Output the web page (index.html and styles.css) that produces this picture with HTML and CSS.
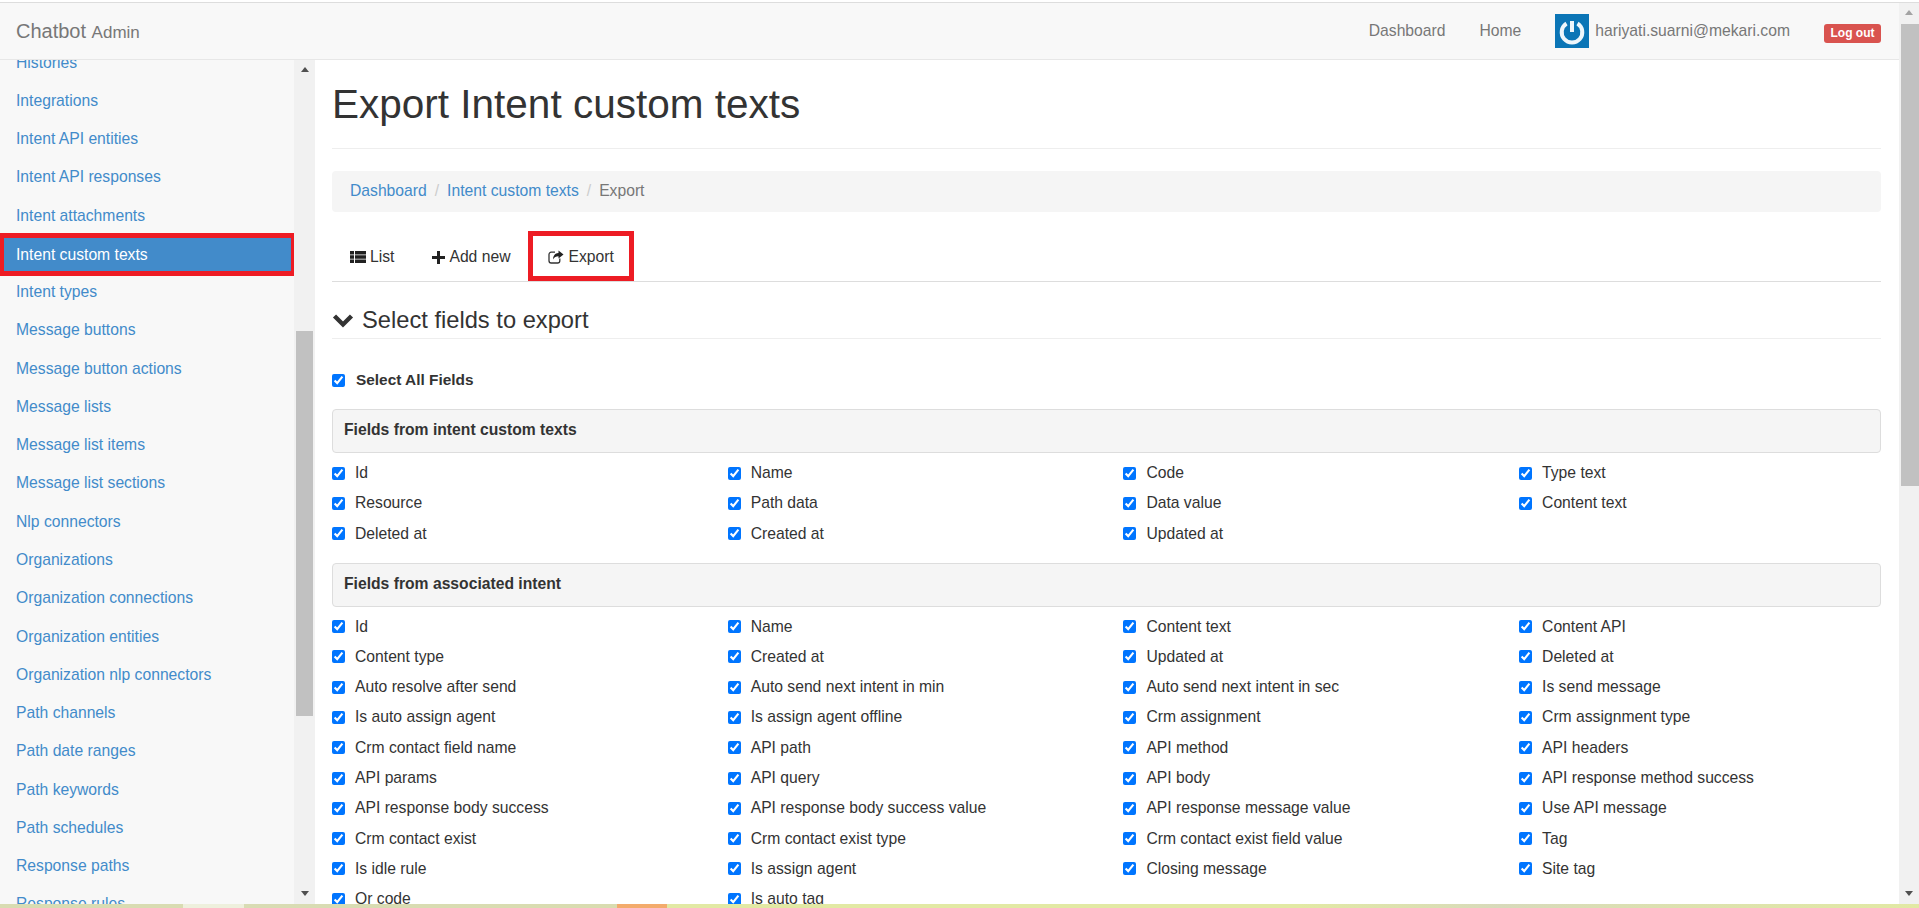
FILE: index.html
```html
<!DOCTYPE html>
<html lang="en">
<head>
  <meta charset="UTF-8">
  <title>Export Intent custom texts</title>
  <link rel="stylesheet" href="styles.css">
</head>
<body>

<div class="top-line"></div>

<div class="window">
  <div class="app">
    <header class="navbar">
      <div class="brand">Chatbot <small>Admin</small></div>
      <nav class="top-nav">
        <a href="#">Dashboard</a>
        <a href="#">Home</a>
        <span class="user">
          <svg class="avatar" viewBox="0 0 34 34">
            <rect width="34" height="34" fill="#0b75b6"/>
            <path d="M11.5 9.5a10.3 10.3 0 1 0 11 0" fill="none" stroke="#eef6fb" stroke-width="4"/>
            <path d="M17 7v11" fill="none" stroke="#eef6fb" stroke-width="4"/>
          </svg>
          hariyati.suarni@mekari.com
        </span>
        <a class="logout" href="#">Log out</a>
      </nav>
    </header>

    <div class="body-row">
      <div class="side-wrap">
        <ul class="side-menu">
          <li><a href="#">Histories</a></li>
          <li><a href="#">Integrations</a></li>
          <li><a href="#">Intent API entities</a></li>
          <li><a href="#">Intent API responses</a></li>
          <li><a href="#">Intent attachments</a></li>
          <li class="active"><a href="#">Intent custom texts</a></li>
          <li><a href="#">Intent types</a></li>
          <li><a href="#">Message buttons</a></li>
          <li><a href="#">Message button actions</a></li>
          <li><a href="#">Message lists</a></li>
          <li><a href="#">Message list items</a></li>
          <li><a href="#">Message list sections</a></li>
          <li><a href="#">Nlp connectors</a></li>
          <li><a href="#">Organizations</a></li>
          <li><a href="#">Organization connections</a></li>
          <li><a href="#">Organization entities</a></li>
          <li><a href="#">Organization nlp connectors</a></li>
          <li><a href="#">Path channels</a></li>
          <li><a href="#">Path date ranges</a></li>
          <li><a href="#">Path keywords</a></li>
          <li><a href="#">Path schedules</a></li>
          <li><a href="#">Response paths</a></li>
          <li><a href="#">Response rules</a></li>
        </ul>
        <div class="scroll-track side-track">
          <span class="arrow-up"></span>
          <div class="scroll-thumb side-thumb"></div>
          <span class="arrow-down"></span>
        </div>
      </div>

      <main class="content">
        <h1 class="page-title">Export Intent custom texts</h1>

        <ol class="breadcrumb">
          <li><a href="#">Dashboard</a></li>
          <li><a href="#">Intent custom texts</a></li>
          <li class="current">Export</li>
        </ol>

        <ul class="tabs">
          <li>
            <a href="#">
              <svg class="icon" viewBox="0 0 16 14"><path d="M0 1h4v3.4H0zM5 1h11v3.4H5zM0 5.3h4v3.4H0zM5 5.3h11v3.4H5zM0 9.6h4V13H0zM5 9.6h11V13H5z" fill="#222"/></svg>
              List
            </a>
          </li>
          <li>
            <a href="#">
              <svg class="icon plus" viewBox="0 0 13 13"><path d="M5 0h3v5h5v3H8v5H5V8H0V5h5z" fill="#222"/></svg>
              Add new
            </a>
          </li>
          <li class="active">
            <a href="#">
              <svg class="icon" viewBox="0 0 16 14"><path d="M7 2.2H3.2A2.2 2.2 0 0 0 1 4.4v6.4A2.2 2.2 0 0 0 3.2 13h6.4a2.2 2.2 0 0 0 2.2-2.2V8.6" fill="none" stroke="#333" stroke-width="1.3"/><path d="M10.5 0.5 15.5 4.6 10.5 8.6V6.2C8 6.2 6.2 7 5 9.4 5 5.6 7.2 3.2 10.5 3z" fill="#222"/></svg>
              Export
            </a>
          </li>
        </ul>

        <h3 class="section-title">
          <svg class="chevron" viewBox="0 0 22 15"><path d="M2.5 3 11 11.5 19.5 3" fill="none" stroke="#333" stroke-width="4.4"/></svg>
          Select fields to export
        </h3>

        <label class="select-all"><input type="checkbox" checked> Select All Fields</label>

        <div class="panel-head">Fields from intent custom texts</div>
        <div class="field-grid">
          <label><input type="checkbox" checked> Id</label>
          <label><input type="checkbox" checked> Name</label>
          <label><input type="checkbox" checked> Code</label>
          <label><input type="checkbox" checked> Type text</label>
          <label><input type="checkbox" checked> Resource</label>
          <label><input type="checkbox" checked> Path data</label>
          <label><input type="checkbox" checked> Data value</label>
          <label><input type="checkbox" checked> Content text</label>
          <label><input type="checkbox" checked> Deleted at</label>
          <label><input type="checkbox" checked> Created at</label>
          <label><input type="checkbox" checked> Updated at</label>
        </div>

        <div class="panel-head second">Fields from associated intent</div>
        <div class="field-grid second">
          <label><input type="checkbox" checked> Id</label>
          <label><input type="checkbox" checked> Name</label>
          <label><input type="checkbox" checked> Content text</label>
          <label><input type="checkbox" checked> Content API</label>
          <label><input type="checkbox" checked> Content type</label>
          <label><input type="checkbox" checked> Created at</label>
          <label><input type="checkbox" checked> Updated at</label>
          <label><input type="checkbox" checked> Deleted at</label>
          <label><input type="checkbox" checked> Auto resolve after send</label>
          <label><input type="checkbox" checked> Auto send next intent in min</label>
          <label><input type="checkbox" checked> Auto send next intent in sec</label>
          <label><input type="checkbox" checked> Is send message</label>
          <label><input type="checkbox" checked> Is auto assign agent</label>
          <label><input type="checkbox" checked> Is assign agent offline</label>
          <label><input type="checkbox" checked> Crm assignment</label>
          <label><input type="checkbox" checked> Crm assignment type</label>
          <label><input type="checkbox" checked> Crm contact field name</label>
          <label><input type="checkbox" checked> API path</label>
          <label><input type="checkbox" checked> API method</label>
          <label><input type="checkbox" checked> API headers</label>
          <label><input type="checkbox" checked> API params</label>
          <label><input type="checkbox" checked> API query</label>
          <label><input type="checkbox" checked> API body</label>
          <label><input type="checkbox" checked> API response method success</label>
          <label><input type="checkbox" checked> API response body success</label>
          <label><input type="checkbox" checked> API response body success value</label>
          <label><input type="checkbox" checked> API response message value</label>
          <label><input type="checkbox" checked> Use API message</label>
          <label><input type="checkbox" checked> Crm contact exist</label>
          <label><input type="checkbox" checked> Crm contact exist type</label>
          <label><input type="checkbox" checked> Crm contact exist field value</label>
          <label><input type="checkbox" checked> Tag</label>
          <label><input type="checkbox" checked> Is idle rule</label>
          <label><input type="checkbox" checked> Is assign agent</label>
          <label><input type="checkbox" checked> Closing message</label>
          <label><input type="checkbox" checked> Site tag</label>
          <label><input type="checkbox" checked> Qr code</label>
          <label><input type="checkbox" checked> Is auto tag</label>
        </div>
      </main>
    </div>
  </div>

  <div class="scroll-track page-track">
    <span class="arrow-up"></span>
    <div class="scroll-thumb page-thumb"></div>
    <span class="arrow-down"></span>
  </div>
</div>

<div class="bottom-strip"></div>

</body>
</html>
```

FILE: styles.css
```css
* {
  box-sizing: border-box;
}

html, body {
  height: 100%;
}

body {
  margin: 0;
  display: flex;
  flex-direction: column;
  overflow: hidden;
  background: #fff;
  color: #333;
  font-family: "Liberation Sans", Arial, sans-serif;
  font-size: 15.7px;
}

a {
  color: #428bca;
  text-decoration: none;
}

.top-line {
  flex: none;
  height: 3px;
  border-bottom: 1px solid #ddd;
  background: #fff;
}

.window {
  flex: 1;
  min-height: 0;
  display: flex;
}

.app {
  flex: 1;
  min-width: 0;
  display: flex;
  flex-direction: column;
}

/* top bar */
.navbar {
  flex: none;
  height: 57px;
  display: flex;
  justify-content: space-between;
  align-items: center;
  padding: 0 18px 0 16px;
  background: #f8f8f8;
  border-bottom: 1px solid #e7e7e7;
  color: #777;
}

.brand {
  font-size: 20px;
}

.brand small {
  font-size: 17px;
}

.top-nav {
  display: flex;
  align-items: center;
}

.top-nav a {
  color: #777;
}

.top-nav a + a {
  margin-left: 34px;
}

.user {
  display: flex;
  align-items: center;
  gap: 6px;
  margin-left: 34px;
  margin-right: 34px;
}

.avatar {
  width: 34px;
  height: 34px;
}

.top-nav .logout {
  width: 57px;
  margin: 4px 0 0;
  line-height: 19px;
  border-radius: 3px;
  background: #d9534f;
  color: #fff;
  font-size: 12px;
  font-weight: bold;
  text-align: center;
}

.body-row {
  flex: 1;
  min-height: 0;
  display: flex;
}

/* sidebar */
.side-wrap {
  flex: none;
  width: 315px;
  display: flex;
  overflow: hidden;
}

.side-menu {
  width: 294px;
  flex: none;
  margin: 0;
  padding: 0;
  list-style: none;
  background: #f8f8f8;
  overflow: visible;
}

.side-menu li {
  height: 38.28px;
  line-height: 38.28px;
  padding-left: 16px;
}

.side-menu li:first-child {
  margin-top: -16.5px;
}

.side-menu .active {
  position: relative;
  height: 43px;
  line-height: 33px;
  margin: -1.9px -2px -2.82px 0;
  padding-left: 12px;
  border: 5px solid #ed1c24;
  border-left-width: 4px;
  background: #428bca;
}

.side-menu .active a {
  color: #fff;
}

/* scrollbars */
.scroll-track {
  flex: none;
  position: relative;
  background: #f1f1f1;
}

.side-track {
  width: 21px;
  padding: 0 2px 0 2px;
}

.page-track {
  width: 20px;
  padding-left: 2px;
}

.scroll-thumb {
  background: #c1c1c1;
}

.side-thumb {
  height: 385px;
  margin-top: 271px;
}

.page-thumb {
  height: 462px;
  margin-top: 21px;
}

.arrow-up,
.arrow-down {
  position: absolute;
  left: 50%;
  margin-left: -4px;
  border-left: 4px solid transparent;
  border-right: 4px solid transparent;
}

.arrow-up {
  top: 7px;
  border-bottom: 5px solid #505050;
}

.arrow-down {
  bottom: 8px;
  border-top: 5px solid #505050;
}

.page-track .arrow-up {
  border-bottom-color: #a3a3a3;
}

/* main column */
.content {
  flex: 1;
  min-width: 0;
  padding: 0 18px 0 17px;
  overflow: hidden;
}

.page-title {
  height: 89px;
  margin: 0;
  padding-top: 21px;
  border-bottom: 1px solid #eee;
  font-size: 40.5px;
  font-weight: 500;
  line-height: 46px;
}

.breadcrumb {
  display: flex;
  align-items: center;
  height: 41px;
  margin: 22px 0 0;
  padding: 0 18px 2px;
  list-style: none;
  border-radius: 4px;
  background: #f5f5f5;
}

.breadcrumb li + li::before {
  content: "/";
  padding: 0 8px;
  color: #ccc;
}

.breadcrumb .current {
  color: #777;
}

.tabs {
  display: flex;
  gap: 8px;
  height: 51px;
  margin: 19px 0 0;
  padding: 0 0 0 3px;
  list-style: none;
  border-bottom: 1px solid #ddd;
}

.tabs a {
  display: flex;
  align-items: center;
  height: 50px;
  gap: 4px;
  padding: 2px 15px 0;
  color: #333;
}

.tabs .active {
  height: 50px;
  margin-left: -5px;
  margin-right: -5px;
  border: 5px solid #ed1c24;
}

.tabs .active a {
  height: 40px;
}

.icon {
  width: 16px;
  height: 14px;
  flex: none;
}

.icon.plus {
  width: 13px;
  height: 13px;
}

.section-title {
  display: flex;
  align-items: center;
  gap: 8px;
  height: 57px;
  margin: 0;
  padding-top: 21px;
  border-bottom: 1px solid #eee;
  font-size: 23.7px;
  font-weight: 500;
  color: #333;
}

.chevron {
  width: 22px;
  height: 15px;
}

input[type="checkbox"] {
  flex: none;
  width: 13px;
  height: 13px;
  margin: 0 10px 0 0;
}

.select-all {
  display: flex;
  align-items: center;
  height: 20px;
  margin: 31px 0 0;
  font-weight: bold;
  font-size: 15.4px;
}

.select-all input[type="checkbox"] {
  margin-right: 11px;
}

.panel-head {
  display: flex;
  align-items: center;
  height: 44px;
  margin-top: 19px;
  padding: 0 0 2px 11px;
  border: 1px solid #ddd;
  border-radius: 4px;
  background: #f5f5f5;
  font-weight: bold;
}

.panel-head.second {
  margin-top: 14px;
}

.field-grid {
  display: grid;
  grid-template-columns: repeat(4, 395.7px);
  grid-auto-rows: 30.3px;
  margin-top: 5px;
}

.field-grid.second {
  margin-top: 4.5px;
}

.field-grid label {
  display: flex;
  align-items: center;
  white-space: nowrap;
}

.bottom-strip {
  flex: none;
  height: 4px;
  background: linear-gradient(90deg,
    #d9dcb2 0, #d9dcb2 183px,
    #eef0dd 183px, #eef0dd 244px,
    #d9dcb4 244px, #d9dcb0 617px,
    #f3ab6c 617px, #f3ab6c 667px,
    #e2e9a4 667px, #e2e9a4 1300px,
    #d8dabb 1500px, #dde2ae 1700px, #e2e9a4 1919px);
}
```
